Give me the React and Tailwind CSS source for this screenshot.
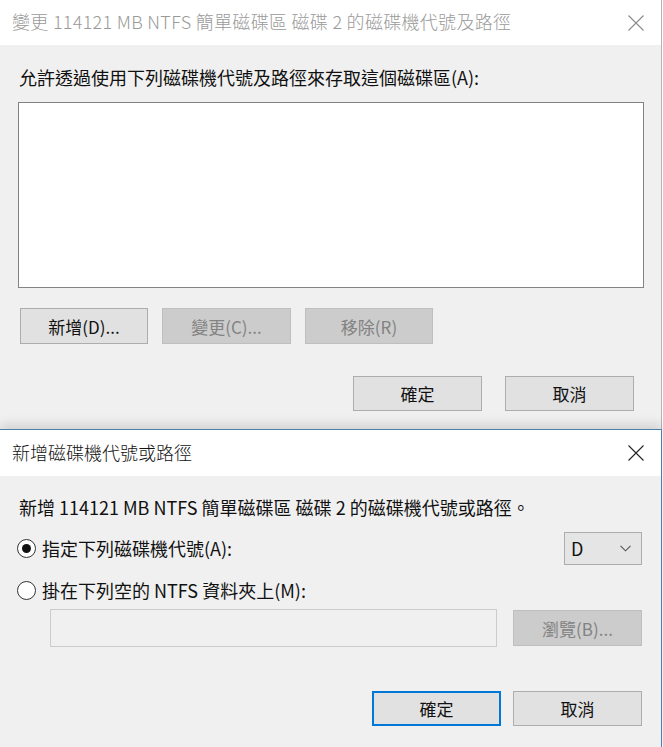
import React from "react";

const F = { fontFamily: '"Noto Sans CJK TC", "Noto Sans", sans-serif' };

function CloseX({ color }) {
  return (
    <svg width="16" height="16" viewBox="0 0 16 16" className="shrink-0">
      <path d="M0.5 0.5 L15.5 15.5 M15.5 0.5 L0.5 15.5" stroke={color} strokeWidth="1.1" fill="none" />
    </svg>
  );
}

function Btn({ children, disabled, primary, w = "w-[129px]", h = "h-[35px]" }) {
  const base = `${w} ${h} flex items-center justify-center text-[17px] leading-none`;
  if (disabled)
    return <div className={`${base} bg-[#cccccc] border border-[#bfbfbf] text-[#838383]`}>{children}</div>;
  if (primary)
    return <div className={`${base} bg-[#e1e1e1] border-2 border-[#0078d7] text-[#111]`}>{children}</div>;
  return <div className={`${base} bg-[#e1e1e1] border border-[#adadad] text-[#111]`}>{children}</div>;
}

function Radio({ checked }) {
  return (
    <div className="w-[19px] h-[19px] rounded-full border border-[#333] bg-white flex items-center justify-center shrink-0">
      {checked && <div className="w-[9px] h-[9px] rounded-full bg-[#111]" />}
    </div>
  );
}

export default function App() {
  return (
    <div className="w-[663px] h-[747px] overflow-hidden bg-white" style={F}>
      {/* Top dialog */}
      <div className="w-[662px] border-r border-[#b4b4b4] bg-[#f0f0f0]">
        <div className="h-[45px] bg-white flex items-center justify-between pl-[12px] pr-[17px]">
          <span className="text-[18px] font-light text-[#9a9a9a] leading-none tracking-[0.3px] -mt-[3px]">
            變更 114121 MB NTFS 簡單磁碟區 磁碟 2 的磁碟機代號及路徑
          </span>
          <CloseX color="#8a8a8a" />
        </div>
        <div className="pt-[20px] pb-[18px]">
          <div className="pl-[19px] h-[24px] flex items-center text-[18px] text-[#111] leading-none">
            允許透過使用下列磁碟機代號及路徑來存取這個磁碟區(A):
          </div>
          <div className="ml-[18px] mt-[13px] w-[626px] h-[186px] bg-white border border-[#828282]" />
          <div className="mt-[20px] pl-[20px] flex gap-[14px]">
            <Btn w="w-[128px]" h="h-[36px]">新增(D)...</Btn>
            <Btn w="w-[129px]" h="h-[36px]" disabled>變更(C)...</Btn>
            <Btn w="w-[128px]" h="h-[36px]" disabled>移除(R)</Btn>
          </div>
          <div className="mt-[32px] pr-[27px] flex justify-end gap-[23px]">
            <Btn>確定</Btn>
            <Btn>取消</Btn>
          </div>
        </div>
      </div>

      {/* Second dialog */}
      <div className="relative w-[662px] border-t border-r border-[#4d7fae] bg-[#f0f0f0] shadow-[0_-5px_10px_rgba(0,0,0,0.12)]">
        <div className="h-[46px] bg-white flex items-center justify-between pl-[12px] pr-[17px]">
          <span className="text-[18px] font-light text-[#111] leading-none -mt-[2px]">新增磁碟機代號或路徑</span>
          <CloseX color="#222" />
        </div>
        <div className="pt-[19px] pb-[30px]">
          <div className="pl-[19px] h-[24px] flex items-center text-[18px] text-[#111] leading-none">
            新增 114121 MB NTFS 簡單磁碟區 磁碟 2 的磁碟機代號或路徑。
          </div>
          <div className="mt-[12px] h-[34px] pl-[17px] pr-[19px] flex items-center justify-between">
            <div className="flex items-center gap-[6px] text-[18px] text-[#111] leading-none">
              <Radio checked />
              <span>指定下列磁碟機代號(A):</span>
            </div>
            <div className="w-[78px] h-[33px] bg-[#e5e5e5] border border-[#adadad] flex items-center justify-between pl-[6px] pr-[10px]">
              <span className="text-[18px] text-[#111] leading-none">D</span>
              <svg width="11" height="7" viewBox="0 0 11 7">
                <path d="M0.5 0.8 L5.5 5.8 L10.5 0.8" stroke="#555" strokeWidth="1.1" fill="none" />
              </svg>
            </div>
          </div>
          <div className="mt-[13px] h-[24px] pl-[17px] flex items-center gap-[6px] text-[18px] text-[#111] leading-none">
            <Radio />
            <span>掛在下列空的 NTFS 資料夾上(M):</span>
          </div>
          <div className="mt-[7px] pl-[50px] pr-[19px] flex items-center justify-between">
            <div className="w-[447px] h-[38px] bg-[#f0f0f0] border border-[#cccccc]" />
            <Btn h="h-[36px]" disabled>瀏覽(B)...</Btn>
          </div>
          <div className="mt-[44px] pr-[19px] flex justify-end gap-[12px]">
            <Btn primary>確定</Btn>
            <Btn>取消</Btn>
          </div>
        </div>
      </div>
    </div>
  );
}
